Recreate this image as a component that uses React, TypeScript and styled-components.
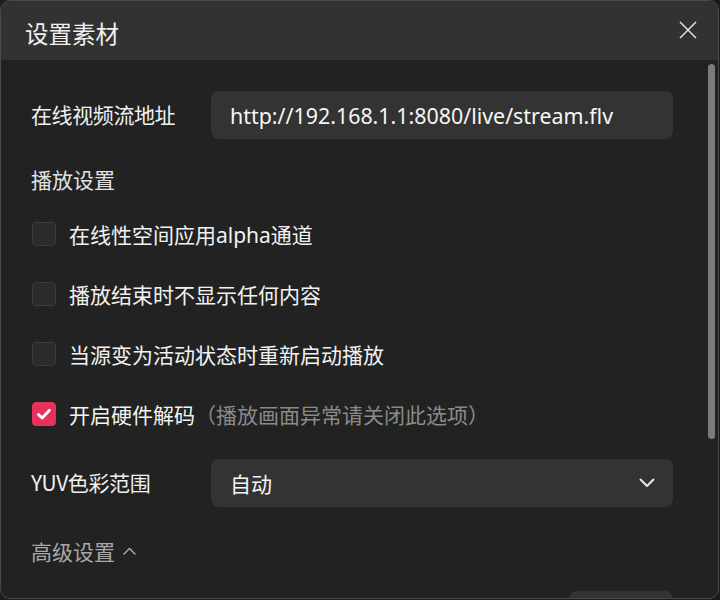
import React from "react";
import styled, { createGlobalStyle } from "styled-components";

const Global = createGlobalStyle`
  html, body { margin: 0; padding: 0; background: #1c1c1c; }
  body { font-family: "Noto Sans", "Noto Sans CJK SC", sans-serif; }
  * { box-sizing: border-box; }
`;

const Dialog = styled.div`
  position: relative;
  width: 719px;
  height: 599px;
  border: 1px solid #4a4a4a;
  border-radius: 10px;
  background: #222222;
  overflow: hidden;
  display: flex;
  flex-direction: column;
`;

const Header = styled.div`
  height: 59px;
  flex: none;
  background: #323232;
  display: flex;
  align-items: center;
  justify-content: space-between;
  padding: 4px 20px 0 24px;
`;

const Title = styled.div`
  font-family: "Noto Sans CJK SC", sans-serif;
  font-size: 23.5px;
  color: #f0f0f0;
  line-height: 30px;
`;

const CloseBtn = styled.button`
  width: 20px;
  height: 20px;
  padding: 0;
  margin-top: -6px;
  border: none;
  background: transparent;
  display: flex;
  align-items: center;
  justify-content: center;
`;

const Body = styled.div`
  flex: 1;
  overflow: hidden;
  padding: 31px 45px 0 30px;
  display: flex;
  flex-direction: column;
`;

const FieldRow = styled.div<{ $mt?: number }>`
  display: grid;
  grid-template-columns: 180px 1fr;
  align-items: center;
  height: 48px;
  margin-top: ${(p) => p.$mt ?? 0}px;
`;

const Label = styled.div`
  font-family: "Noto Sans CJK SC", sans-serif;
  font-size: 21px;
  color: #f0f0f0;
  white-space: nowrap;
  letter-spacing: -0.4px;
  margin-top: -2px;
`;

const Input = styled.div`
  height: 48px;
  border-radius: 8px;
  background: #333333;
  display: flex;
  align-items: center;
  justify-content: space-between;
  padding: 0 18px 0 19px;
  font-size: 21.4px;
  color: #f6f6f6;
  font-family: "Noto Sans", "Noto Sans CJK SC", sans-serif;
`;

const SelectText = styled.span`
  font-family: "Noto Sans CJK SC", sans-serif;
  font-size: 21px;
`;

const Section = styled.div<{ $mt: number; $muted?: boolean }>`
  margin-top: ${(p) => p.$mt}px;
  height: 30px;
  display: flex;
  align-items: center;
  gap: 8px;
  font-family: "Noto Sans CJK SC", sans-serif;
  font-size: 21px;
  color: ${(p) => (p.$muted ? "#a8a8a8" : "#e2e2e2")};
`;

const CheckList = styled.div`
  margin-top: 10px;
  display: flex;
  flex-direction: column;
`;

const CheckRow = styled.label`
  height: 60px;
  display: flex;
  align-items: center;
  gap: 13px;
  padding-left: 1px;
  font-family: "Noto Sans", "Noto Sans CJK SC", sans-serif;
  font-size: 21px;
  color: #f2f2f2;
`;

const Box = styled.span<{ $on?: boolean }>`
  width: 24px;
  height: 24px;
  border-radius: 4px;
  flex: none;
  display: flex;
  align-items: center;
  justify-content: center;
  background: ${(p) => (p.$on ? "#e6325a" : "#2b2b2b")};
  border: 1px solid ${(p) => (p.$on ? "#e6325a" : "#3c3c3c")};
`;

const Hint = styled.span`
  color: #8a8a8a;
  font-family: "Noto Sans CJK SC", sans-serif;
`;

const Footer = styled.div`
  margin-top: 25px;
  display: flex;
  justify-content: flex-end;
`;

const FooterBtn = styled.div`
  width: 104px;
  height: 40px;
  border-radius: 8px;
  background: #333333;
`;

const ScrollThumb = styled.div`
  position: absolute;
  left: 707px;
  top: 63px;
  width: 7px;
  height: 375px;
  border-radius: 4px;
  background: #7b7b7b;
`;

const items = [
  { text: "在线性空间应用alpha通道", on: false },
  { text: "播放结束时不显示任何内容", on: false },
  { text: "当源变为活动状态时重新启动播放", on: false },
  { text: "开启硬件解码", on: true, hint: "（播放画面异常请关闭此选项）" },
];

export default function App() {
  return (
    <>
      <Global />
      <Dialog>
        <Header>
          <Title>设置素材</Title>
          <CloseBtn aria-label="close">
            <svg width="18" height="18" viewBox="0 0 18 18">
              <path d="M1 1 L17 17 M17 1 L1 17" stroke="#e0e0e0" strokeWidth="1.5" />
            </svg>
          </CloseBtn>
        </Header>
        <Body>
          <FieldRow>
            <Label>在线视频流地址</Label>
            <Input>http://192.168.1.1:8080/live/stream.flv</Input>
          </FieldRow>
          <Section $mt={25}>播放设置</Section>
          <CheckList>
            {items.map((it) => (
              <CheckRow key={it.text}>
                <Box $on={it.on}>
                  {it.on && (
                    <svg width="16" height="16" viewBox="0 0 16 16">
                      <path
                        d="M2.5 8.5 L6.2 12 L13.5 4.2"
                        stroke="#ffffff"
                        strokeWidth="2.8"
                        fill="none"
                        strokeLinecap="round"
                        strokeLinejoin="round"
                      />
                    </svg>
                  )}
                </Box>
                <span>
                  {it.text}
                  {it.hint && <Hint>{it.hint}</Hint>}
                </span>
              </CheckRow>
            ))}
          </CheckList>
          <FieldRow $mt={15}>
            <Label>YUV色彩范围</Label>
            <Input>
              <SelectText>自动</SelectText>
              <svg width="16" height="10" viewBox="0 0 16 10">
                <path
                  d="M1.5 1.5 L8 8 L14.5 1.5"
                  stroke="#e8e8e8"
                  strokeWidth="2"
                  fill="none"
                  strokeLinecap="round"
                  strokeLinejoin="round"
                />
              </svg>
            </Input>
          </FieldRow>
          <Section $mt={29} $muted>
            高级设置
            <svg width="13" height="8" viewBox="0 0 13 8">
              <path
                d="M1 7 L6.5 1.5 L12 7"
                stroke="#b0b0b0"
                strokeWidth="1.4"
                fill="none"
                strokeLinecap="round"
                strokeLinejoin="round"
              />
            </svg>
          </Section>
          <Footer>
            <FooterBtn />
          </Footer>
        </Body>
        <ScrollThumb />
      </Dialog>
    </>
  );
}
